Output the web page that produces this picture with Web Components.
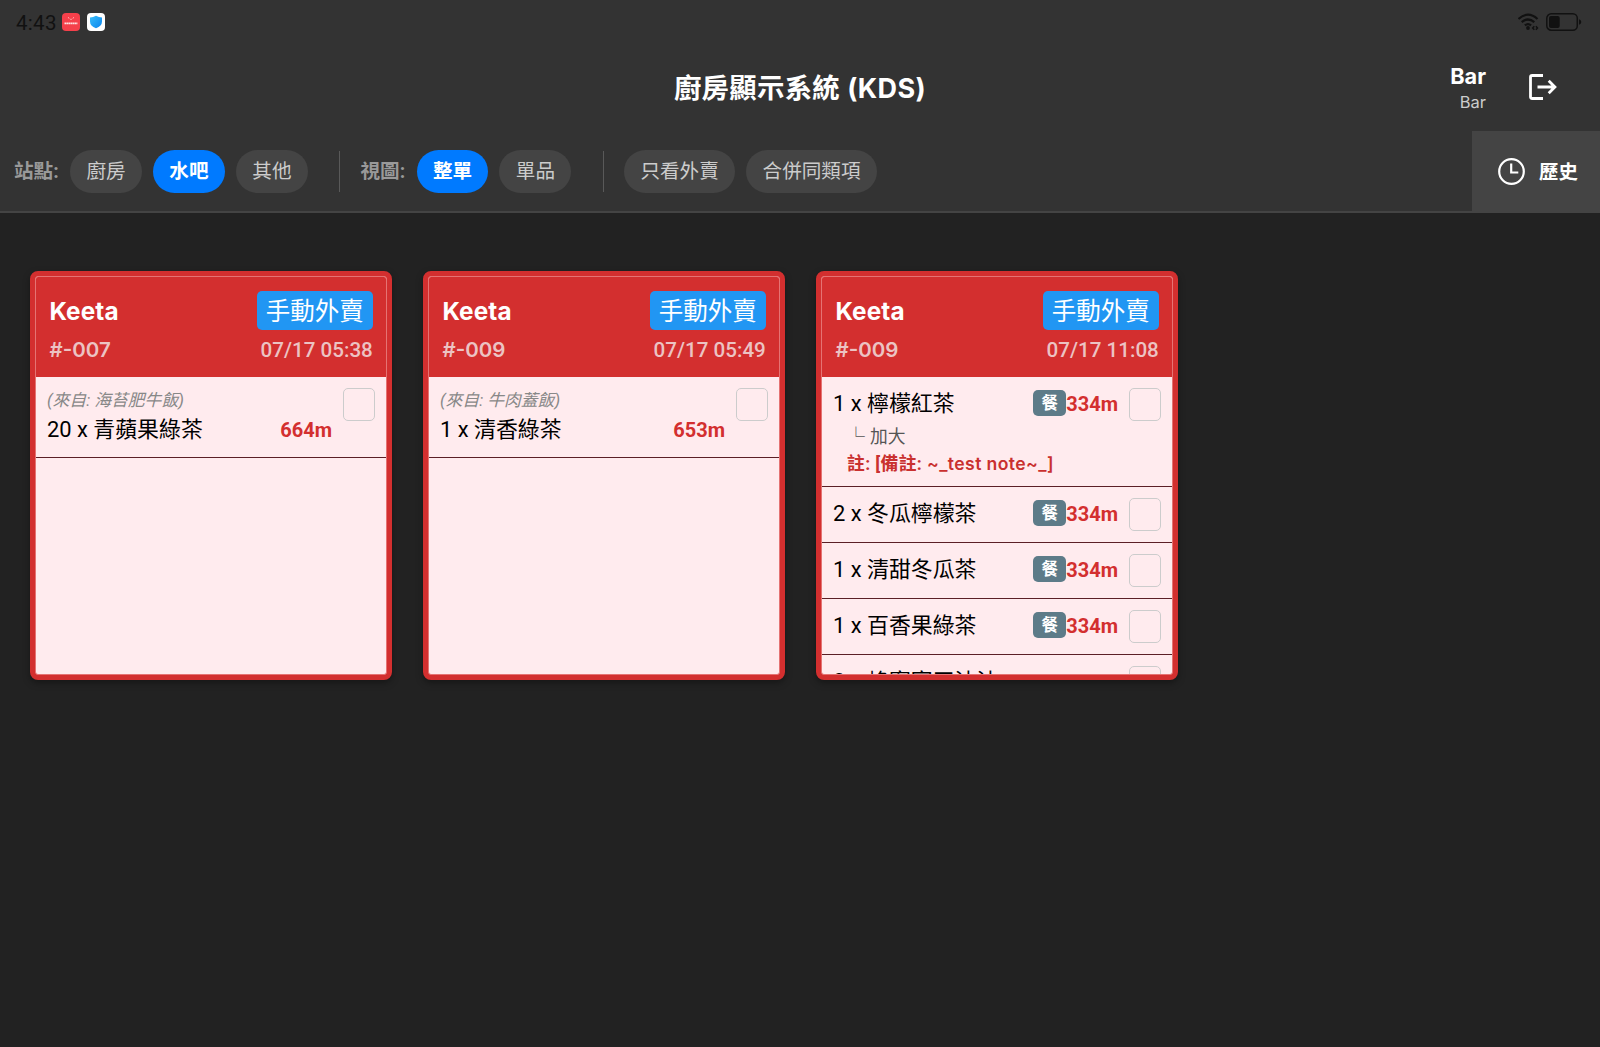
<!DOCTYPE html>
<html lang="zh-Hant">
<head>
<meta charset="utf-8">
<title>廚房顯示系統 (KDS)</title>
<style>
html,body{margin:0;height:100%;background:#222;overflow:hidden}
body{font-family:Roboto,"Noto Sans CJK TC",sans-serif;color:#fff;--wide:Inter,"Noto Sans CJK TC",sans-serif}
</style>
</head>
<body>
<kds-app></kds-app>
<script>
const define = (name, html) => customElements.define(name, class extends HTMLElement {
  connectedCallback() {
    if (this.shadowRoot) return;
    const t = document.createElement('template');
    t.innerHTML = typeof html === 'function' ? html(this) : html;
    this.attachShadow({mode: 'open'}).append(t.content.cloneNode(true));
  }
});

define('kds-status', `
<style>
:host{display:flex;align-items:center;height:44px;padding:0 18px 0 16px;box-sizing:border-box;color:#111}
.time{font-size:20.5px;line-height:24px;letter-spacing:.3px;margin-right:6px;width:40px;white-space:nowrap;padding-top:1px}
svg{display:block}
.app{margin-right:7px}
.end{margin-left:auto;display:flex;gap:6px;align-items:center}
</style>
<span class="time">4:43</span>
<svg class="app" width="18" height="18" viewBox="0 0 18 18"><rect width="18" height="18" rx="4" fill="#f5404b"/><path d="M6.200 4 7.200 5.800M11.800 4 10.800 5.800M8 6.300h2" stroke="#ffb4b4" stroke-width=".8" fill="none"/><path d="M2.500 10.300h13" stroke="#ffe3e3" stroke-width="1.700" stroke-dasharray="1.800 .3"/></svg>
<svg class="app" width="18" height="18" viewBox="0 0 18 18"><defs><linearGradient id="g" x2="1" y2="1"><stop stop-color="#38bdf8"/><stop offset="1" stop-color="#0a84ee"/></linearGradient></defs><rect width="18" height="18" rx="4" fill="#fff"/><path d="M9 2.800Q12 4.600 15 4.600V8.500Q15 13 9 15.300 3 13 3 8.500V4.600Q6 4.600 9 2.800Z" fill="url(#g)"/></svg>
<div class="end">
<svg width="22" height="18" viewBox="0 0 22 18" fill="none" stroke="#111" stroke-width="2.200"><path d="M.5 6Q10-2.600 19.500 6M3.700 9.200Q10 3.800 16.300 9.200M6.900 12.300Q10 9.800 13.100 12.300"/><circle cx="10" cy="15" r="1.900" fill="#111" stroke="none"/><path d="M16.300 13.200 14.700 15l1.600 1.800M17.900 13.200 19.500 15l-1.600 1.800" stroke-width="1.500"/></svg>
<svg width="36" height="18" viewBox="0 0 36 18"><rect x=".8" y=".8" width="30.500" height="16.400" rx="4.500" fill="none" stroke="#111" stroke-width="1.500"/><rect x="3" y="3" width="10.700" height="12" rx="2" fill="#111"/><path d="M33 6.300q2.300.4 2.300 2.700t-2.300 2.700z" fill="#111"/></svg>
</div>`);

define('kds-header', `
<style>
:host{display:grid;grid-template-columns:1fr auto 1fr;align-items:center;height:87px}
h1{grid-column:2;margin:0;padding-top:2px;font-size:27.4px;line-height:36px;font-weight:700;white-space:nowrap;letter-spacing:.3px}
h1 span{font-family:var(--wide);font-size:27px;letter-spacing:.4px}
.right{display:flex;justify-content:flex-end;align-items:center;padding-right:43px;gap:43px}
.user{display:flex;flex-direction:column;align-items:flex-end;font-family:var(--wide)}
b{font-size:21.700px;line-height:28px}
i{font-style:normal;font-size:16.500px;line-height:24px;color:#ccc}
svg{display:block;margin-bottom:2px}
</style>
<h1>廚房顯示系統 <span>(KDS)</span></h1>
<div class="right"><div class="user"><b>Bar</b><i>Bar</i></div>
<svg width="28" height="26" viewBox="0 0 28 26" fill="none" stroke="#fff" stroke-width="2.800"><path d="M14 1.500H3.200Q1.500 1.500 1.500 3.200V22.800Q1.500 24.500 3.200 24.500H14M8.500 13H25.500M19.700 6.800 25.900 13l-6.200 6.200"/></svg></div>`);

define('kds-pill', `
<style>
:host{display:flex;align-items:center;justify-content:center;box-sizing:border-box;height:43px;padding:1px 16.400px 0;border-radius:22px;background:#444;color:#ccc;font-size:19.600px;line-height:28px;white-space:nowrap}
:host([on]){background:#007aff;color:#fff;font-weight:700}
</style><slot></slot>`);

define('kds-divider', `<style>:host{display:block;width:1px;height:41px;background:#595959;margin:0 20.300px 0 31.300px}</style>`);

define('kds-toolbar', `
<style>
:host{display:flex;height:82px;color:#fff}
.bar{flex:1;display:flex;align-items:center;box-sizing:border-box;padding-left:14px;border-bottom:2px solid #444}
.group{display:flex;align-items:center;gap:11px}
label{font-size:19.600px;line-height:28px;color:#999;font-weight:700;width:45px;white-space:nowrap;padding-top:1px}
.history{width:128px;background:#444;display:flex;align-items:center;box-sizing:border-box;padding:0 0 2px 26px;gap:14px;font-size:19.400px;font-weight:700;line-height:28px;white-space:nowrap}
.history span{padding-top:3px}
</style>
<div class="bar">
<div class="group"><label>站點:</label><kds-pill>廚房</kds-pill><kds-pill on>水吧</kds-pill><kds-pill>其他</kds-pill></div>
<kds-divider></kds-divider>
<div class="group"><label>視圖:</label><kds-pill on>整單</kds-pill><kds-pill>單品</kds-pill></div>
<kds-divider></kds-divider>
<div class="group"><kds-pill>只看外賣</kds-pill><kds-pill>合併同類項</kds-pill></div>
</div>
<div class="history"><svg width="27" height="27" viewBox="0 0 27 27" fill="none" stroke="#fff" stroke-width="2.200"><circle cx="13.500" cy="13.500" r="12.300"/><path d="M13.200 5.500V14.500H20.300"/></svg><span>歷史</span></div>`);

define('kds-item', el => `
<style>
:host{display:flex;box-sizing:border-box;min-height:56px;padding:11px 10.300px 11px 11px;border-bottom:1px solid #5b1f26;align-items:flex-start;flex:none}
:host([note]){padding-bottom:9px}
.main{flex:1;min-width:0}
.from{font-size:16.800px;line-height:24px;padding-bottom:2px;font-style:italic;color:#888;white-space:nowrap}
.line{display:flex;align-items:center;height:32px;white-space:nowrap}
.name{flex:1;font-size:21.900px;line-height:32px;color:#000}
.tag{background:#5d7b88;color:#fff;font-size:16.500px;font-weight:700;line-height:27px;width:33px;height:26px;border-radius:5px;text-align:center;margin-bottom:2px}
.time{color:#d32f2f;font-size:20px;font-weight:700;line-height:26px;width:51px;margin-right:11.500px}
.opt{font-size:17.800px;line-height:27px;color:#555;padding:3px 0 0 14px;white-space:nowrap;word-spacing:.7px}
.note{font-size:17.800px;line-height:27px;color:#c9302f;font-weight:700;padding-left:14px;white-space:nowrap;letter-spacing:.35px}
.note span{font-family:var(--wide);font-size:17.600px;font-weight:600;letter-spacing:.4px}
.check{width:32.500px;height:33px;box-sizing:border-box;border:1.500px solid #ccc;border-radius:5px;flex:none}
</style>
<div class="main">
${el.getAttribute('from') ? `<div class="from">${el.getAttribute('from')}</div>` : ''}
<div class="line"><span class="name"><slot></slot></span>${el.hasAttribute('tag') ? '<span class="tag">餐</span>' : ''}${el.getAttribute('time') ? `<span class="time">${el.getAttribute('time')}</span>` : ''}</div>
${el.getAttribute('opt') ? `<div class="opt">└ ${el.getAttribute('opt')}</div>` : ''}
${el.getAttribute('note') ? `<div class="note">${el.getAttribute('note').replace(/~.*$/, '<span>$&</span>')}</div>` : ''}
</div><div class="check"></div>`);

define('kds-card', el => `
<style>
:host{display:flex;flex-direction:column;box-sizing:border-box;width:361.5px;height:409px;border:5px solid #d32f2f;border-radius:8px;background:#d32f2f;box-shadow:0 3px 7px rgba(0,0,0,.35)}
.inner{flex:1;min-height:0;display:flex;flex-direction:column;border:1px solid #e57373;border-radius:3px;overflow:hidden;background:#ffebee}
header{flex:none;height:100px;box-sizing:border-box;background:#d32f2f;padding:14px 12.700px 0 13.500px}
.row{display:flex;justify-content:space-between;align-items:center;white-space:nowrap;height:39px}
.brand{font-family:var(--wide);font-size:24.300px;font-weight:700;line-height:39px;color:#fff;letter-spacing:.1px;padding-top:1px}
.badge{background:#2196f3;color:#fff;border-radius:5px;width:116px;height:39px;line-height:41px;font-size:24.500px;text-align:center}
.row.sub{height:40px;font-size:20.600px;line-height:40px;font-weight:500;color:#ecc3c3}
.num{font-family:var(--wide);font-size:20.500px;font-weight:600}
</style>
<div class="inner">
<header><div class="row"><span class="brand">Keeta</span><span class="badge">手動外賣</span></div>
<div class="row sub"><span class="num">${el.getAttribute('num')}</span><span>${el.getAttribute('date')}</span></div></header>
<slot></slot></div>`);

define('kds-app', `
<style>
:host{display:flex;flex-direction:column;height:1047px;width:1600px;background:#222;overflow:hidden}
.top{background:#333;flex:none}
main{display:flex;gap:31.500px;padding:58px 30px;align-items:flex-start}
</style>
<div class="top"><kds-status></kds-status><kds-header></kds-header><kds-toolbar></kds-toolbar></div>
<main>
<kds-card num="#-007" date="07/17 05:38"><kds-item from="(來自: 海苔肥牛飯)" time="664m">20 x 青蘋果綠茶</kds-item></kds-card>
<kds-card num="#-009" date="07/17 05:49"><kds-item from="(來自: 牛肉蓋飯)" time="653m">1 x 清香綠茶</kds-item></kds-card>
<kds-card num="#-009" date="07/17 11:08">
<kds-item tag time="334m" opt="加大" note="註: [備註: ~_test note~_]">1 x 檸檬紅茶</kds-item>
<kds-item tag time="334m">2 x 冬瓜檸檬茶</kds-item>
<kds-item tag time="334m">1 x 清甜冬瓜茶</kds-item>
<kds-item tag time="334m">1 x 百香果綠茶</kds-item>
<kds-item>2 x 蜂蜜寒天波波</kds-item>
</kds-card>
</main>`);
</script>
</body>
</html>
